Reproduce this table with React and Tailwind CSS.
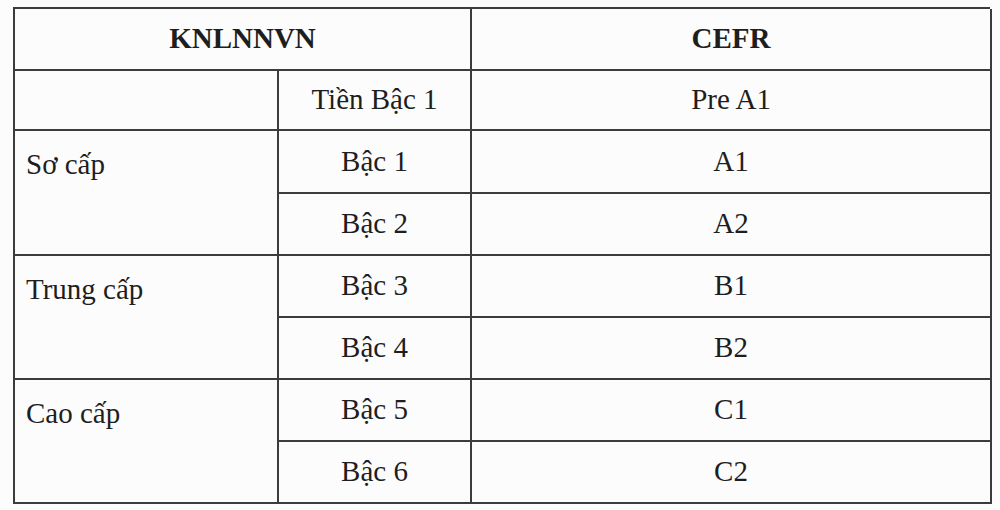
import React from 'react';

const ROWS = [
  { group: null, level: 'Tiền Bậc 1', cefr: 'Pre A1' },
  { group: 'Sơ cấp', level: 'Bậc 1', cefr: 'A1' },
  { group: '', level: 'Bậc 2', cefr: 'A2' },
  { group: 'Trung cấp', level: 'Bậc 3', cefr: 'B1' },
  { group: '', level: 'Bậc 4', cefr: 'B2' },
  { group: 'Cao cấp', level: 'Bậc 5', cefr: 'C1' },
  { group: '', level: 'Bậc 6', cefr: 'C2' },
];

const cell = 'border-r-2 border-b-2 border-[#3c3c3c] flex items-center';

export default function App() {
  return (
    <div className="w-[1000px] h-[510px] bg-[#fcfcfc] pt-[7px] pl-[13px]" style={{ fontFamily: '"Liberation Serif", "Times New Roman", serif' }}>
      <div className="grid grid-cols-[264px_193px_520px] grid-rows-[62px_60px_63px_62px_62px_62px_62px_62px] w-[977px] border-t-2 border-l-2 border-[#3c3c3c] text-[29px] text-[#1e1e1e]">
        <div className={`${cell} col-span-2 justify-center font-bold`}>KNLNNVN</div>
        <div className={`${cell} justify-center font-bold`}>CEFR</div>

        <div className={cell}></div>
        <div className={`${cell} justify-center`}>{ROWS[0].level}</div>
        <div className={`${cell} justify-center`}>{ROWS[0].cefr}</div>

        {[1, 3, 5].map(i => (
          <React.Fragment key={i}>
            <div className="row-span-2 border-r-2 border-b-2 border-[#3c3c3c] pl-[11px] pt-[12px]">{ROWS[i].group}</div>
            <div className={`${cell} justify-center`}>{ROWS[i].level}</div>
            <div className={`${cell} justify-center`}>{ROWS[i].cefr}</div>
            <div className={`${cell} justify-center`}>{ROWS[i + 1].level}</div>
            <div className={`${cell} justify-center`}>{ROWS[i + 1].cefr}</div>
          </React.Fragment>
        ))}
      </div>
    </div>
  );
}
